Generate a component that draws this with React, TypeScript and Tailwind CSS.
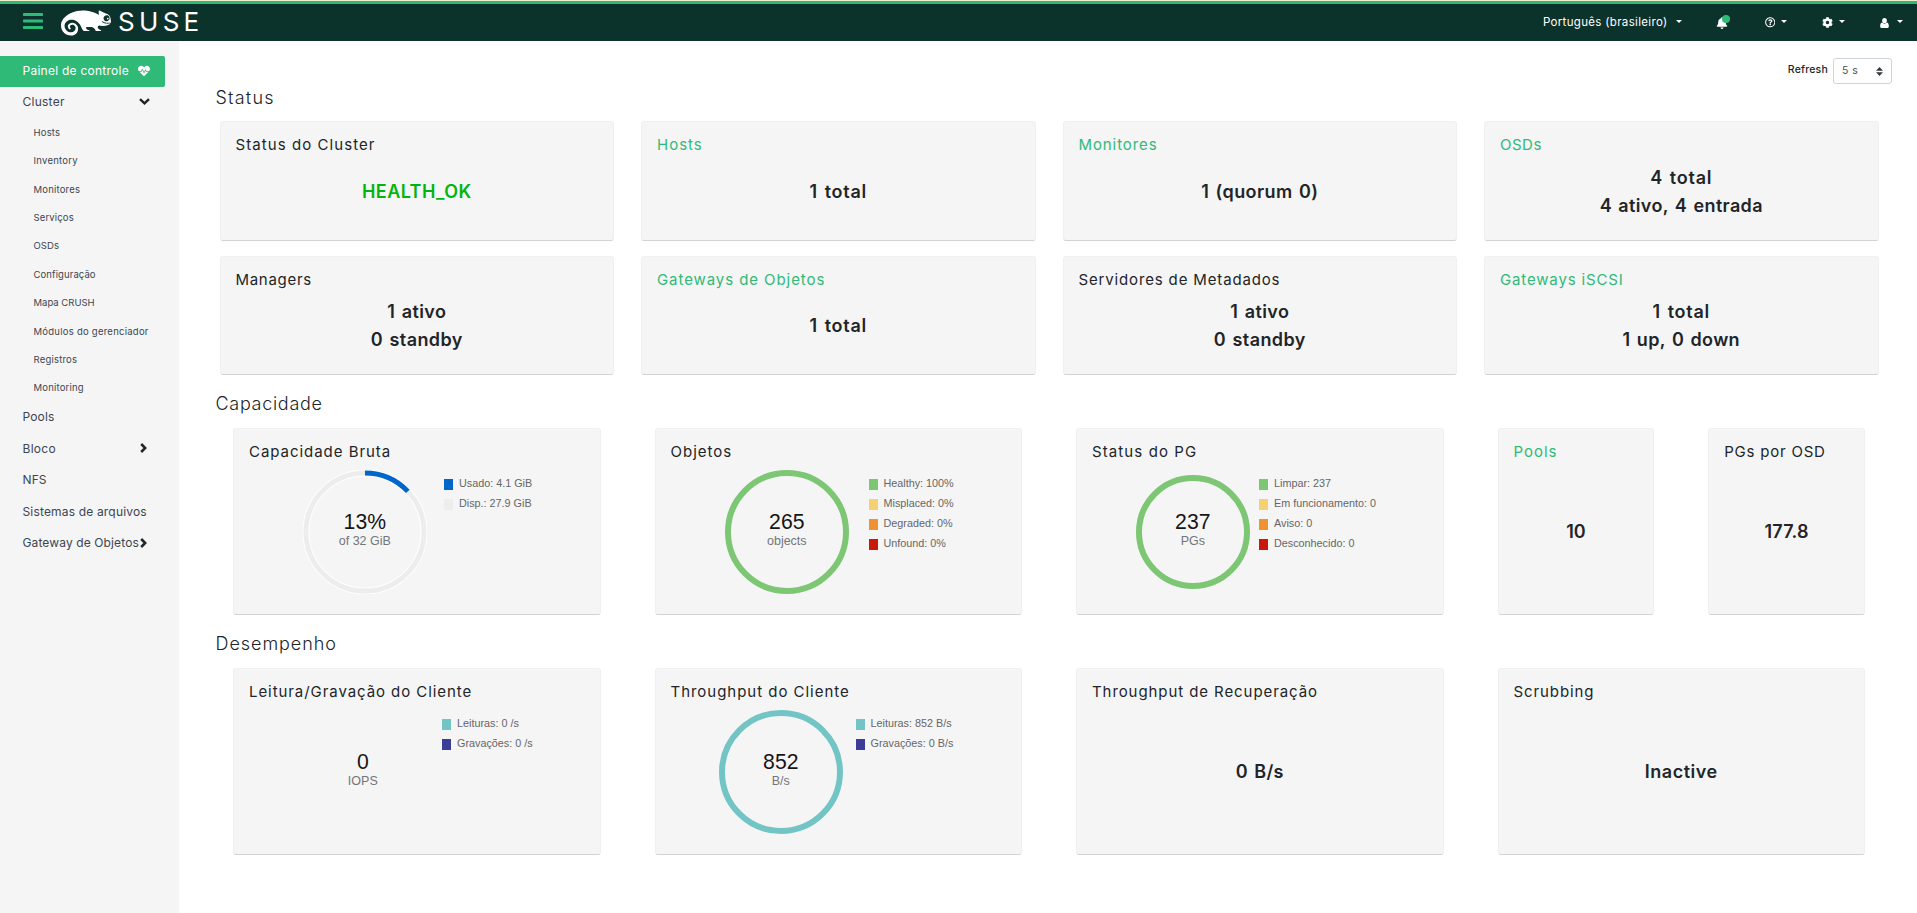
import React from "react";
import { SiSuse } from "react-icons/si";
import { FaBell, FaCog, FaHeartbeat, FaRegQuestionCircle } from "react-icons/fa";

type Legend = { color: string; label: string };

function Card({ title, link, tracking, children, className = "" }: { title: string; link?: boolean; tracking: string; children?: React.ReactNode; className?: string }) {
  return (
    <section className={`flex flex-col rounded-[3px] border border-[#f0f0f0] border-b-[#d2d3d3] bg-[#f5f5f5] ${className}`}>
      <h3 className={`h-[41px] shrink-0 whitespace-nowrap pl-[15px] pt-[11px] text-[15px] leading-6 ${tracking} ${link ? "text-[#30ba78]" : "text-[#212529]"}`}>{title}</h3>
      {children}
    </section>
  );
}

function Value({ lines, tracking, green }: { lines: string[]; tracking: string[]; green?: boolean }) {
  return (
    <div className={`flex grow flex-col items-center justify-center pb-[20px] text-[18px] font-semibold leading-[28px] [word-spacing:1.500px] ${green ? "text-[#00b50f]" : "text-[#212529]"}`}>
      {lines.map((l, i) => (
        <span key={l} className={`whitespace-nowrap ${tracking[i]}`}>{l}</span>
      ))}
    </div>
  );
}

function Donut({ value, unit, color, r = 59, share = 1 }: { value: string; unit: string; color?: string; r?: number; share?: number }) {
  const len = 2 * Math.PI * r;
  return (
    <svg width="124" height="124" viewBox="0 0 124 124" className="shrink-0 font-['Liberation_Sans',sans-serif]">
      {color && share < 1 && (
        <>
          <circle cx="62" cy="62" r={r} fill="none" stroke="#fff" strokeWidth="7" />
          <circle cx="62" cy="62" r={r} fill="none" stroke="#ededed" strokeWidth="5" />
        </>
      )}
      {color && (
        <circle cx="62" cy="62" r={r} fill="none" stroke={color} strokeWidth={share < 1 ? 5 : 6} strokeDasharray={share < 1 ? `${len * share} ${len}` : undefined} transform="rotate(-90 62 62)" />
      )}
      <text x="61.8" y="59" textAnchor="middle" fontSize="21.2" fill="#151515">{value}</text>
      <text x="61.8" y="75" textAnchor="middle" fontSize="12.5" fill="#72767b">{unit}</text>
    </svg>
  );
}

function LegendList({ items, className }: { items: Legend[]; className: string }) {
  return (
    <ul className={`flex flex-col font-['Liberation_Sans',sans-serif] text-[10.8px] text-[#666] ${className}`}>
      {items.map((it) => (
        <li key={it.label} className="flex h-5 items-center gap-[6px] whitespace-nowrap">
          <svg width="9" height="11"><rect width="9" height="11" fill={it.color} /></svg>
          <span className="-mt-px">{it.label}</span>
        </li>
      ))}
    </ul>
  );
}

const Caret = () => (
  <svg width="6" height="3" viewBox="0 0 6 3" className="mb-[3px]"><path d="M0 0h6L3 3z" fill="#fff" /></svg>
);

const ChevronRight = () => (
  <svg width="7" height="10" viewBox="0 0 7 10" className="mb-[2px] shrink-0"><path d="M1.200 1 5.200 5 1.200 9" fill="none" stroke="#212529" strokeWidth="2.500" /></svg>
);

const ChevronDown = () => (
  <svg width="11" height="7" viewBox="0 0 11 7" className="mb-[2px] shrink-0"><path d="M1 1.200 5.500 5.300 10 1.200" fill="none" stroke="#212529" strokeWidth="2.500" /></svg>
);

const subItems: [string, string][] = [
  ["Hosts", "tracking-[0.2px]"],
  ["Inventory", "tracking-[0.25px]"],
  ["Monitores", "tracking-[0.2px]"],
  ["Serviços", "tracking-[0.15px]"],
  ["OSDs", "tracking-[0.1px]"],
  ["Configuração", "tracking-[0.1px]"],
  ["Mapa CRUSH", "tracking-[0px]"],
  ["Módulos do gerenciador", "tracking-[0.25px]"],
  ["Registros", "tracking-[0.2px]"],
  ["Monitoring", "tracking-[0.2px]"],
];

const mainItems: [string, string, boolean][] = [
  ["Pools", "tracking-[0.15px]", false],
  ["Bloco", "tracking-[0.3px]", true],
  ["NFS", "tracking-[0.1px]", false],
  ["Sistemas de arquivos", "tracking-[0.17px]", false],
  ["Gateway de Objetos", "tracking-[0.12px]", true],
];

export default function App() {
  return (
    <div className="flex h-[913px] w-[1917px] flex-col overflow-hidden bg-white font-['Inter',sans-serif] text-[#212529]">
      <header className="flex h-[41px] shrink-0 items-center border-t border-[#f3eecb] bg-[#0c322c] text-white">
        <div className="flex h-full w-full items-center border-t-[3px] border-[#30ba78]">
          <svg width="20" height="16" viewBox="0 0 20 16" className="mb-[3px] ml-[23px]" fill="#30ba78">
            <rect y="0" width="20" height="3" rx="0.7" /><rect y="6.5" width="20" height="3" rx="0.7" /><rect y="13" width="20" height="3" rx="0.7" />
          </svg>
          <SiSuse className="ml-[18px] size-[50px]" />
          <span className="mb-[2px] ml-[7px] text-[26px] leading-none tracking-[4.300px]">SUSE</span>
          <nav className="ml-auto flex h-full items-center pr-[14px] text-[11.5px]">
            <span className="tracking-[0.33px]">Português (brasileiro)</span>
            <span className="ml-[8px]"><Caret /></span>
            <span className="relative ml-[34px]">
              <FaBell className="size-[12px]" />
              <i className="absolute -top-[2px] left-[6px] size-[8px] rounded-full bg-[#30ba78]" />
            </span>
            <FaRegQuestionCircle className="ml-[37px] size-[10.5px]" />
            <span className="ml-[6px]"><Caret /></span>
            <FaCog className="ml-[35px] size-[11px]" />
            <span className="ml-[6px]"><Caret /></span>
            <svg width="9" height="10" viewBox="0 0 10 10" preserveAspectRatio="none" className="ml-[35px]" fill="#fff">
              <circle cx="5" cy="2.7" r="2.6" /><path d="M2.2 4.6C.7 5 .2 6.500.2 8.200.2 9.300.8 10 1.800 10h6.400c1 0 1.600-.7 1.600-1.800 0-1.700-.5-3.200-2-3.600-1.500 1.500-4.100 1.500-5.600 0z" />
            </svg>
            <span className="ml-[8px]"><Caret /></span>
          </nav>
        </div>
      </header>

      <div className="flex min-h-0 grow">
        <aside className="w-[179px] shrink-0 bg-[#f5f5f5] pt-[15px] text-[12px] text-[#3c4650]">
          <div className="flex h-[31px] w-[165px] items-center justify-between rounded-r-[2px] bg-[#30ba78] pl-[22.5px] pr-[15px] text-white">
            <span className="whitespace-nowrap pb-px tracking-[0.25px]">Painel de controle</span>
            <FaHeartbeat className="mb-px size-[12px]" />
          </div>
          <div className="flex h-[31px] w-[165px] items-center justify-between pl-[22.5px] pr-[15px]">
            <span className="pb-px tracking-[0.25px]">Cluster</span>
            <ChevronDown />
          </div>
          <ul className="-mb-[0.8px] pt-[0.8px]">
            {subItems.map(([l, t]) => (
              <li key={l} className={`flex h-[28.4px] items-center pl-[33.500px] text-[9.5px] ${t}`}>{l}</li>
            ))}
          </ul>
          {mainItems.map(([l, t, c]) => (
            <div key={l} className="flex h-[31.5px] w-[165px] items-center justify-between pl-[22.5px] pr-[18px]">
              <span className={`whitespace-nowrap pb-px ${t}`}>{l}</span>
              {c && <ChevronRight />}
            </div>
          ))}
        </aside>

        <main className="grow">
          <div className="flex h-[46px] items-end justify-end gap-[5px] pr-[25px]">
            <label className="mb-[9px] text-[10.5px] font-medium tracking-[0.2px]">Refresh</label>
            <div className="mb-[3px] flex h-[26px] w-[59px] items-center justify-between rounded-[3px] border border-[#ced4da] bg-white pl-[8px] pr-[8px] text-[10.5px] text-[#495057]">
              <span className="[word-spacing:1px]">5 s</span>
              <svg width="7" height="9" viewBox="0 0 7 9" fill="#343a40"><path d="M3.500 0 7 3.800H0zM3.500 9 0 5.200h7z" /></svg>
            </div>
          </div>

          <h2 className="ml-[36.5px] flex h-[34px] items-center pb-[14px] text-[18px] font-light tracking-[1.200px]">Status</h2>
          <div className="ml-[40.5px] grid w-[1659px] grid-cols-4 gap-x-[27px] gap-y-[15px]">
            <Card title="Status do Cluster" tracking="tracking-[1.07px]" className="h-[120px]"><Value green lines={["HEALTH_OK"]} tracking={["tracking-[0.42px]"]} /></Card>
            <Card title="Hosts" link tracking="tracking-[1px]"><Value lines={["1 total"]} tracking={["tracking-[0.75px]"]} /></Card>
            <Card title="Monitores" link tracking="tracking-[0.9px]"><Value lines={["1 (quorum 0)"]} tracking={["tracking-[0.4px]"]} /></Card>
            <Card title="OSDs" link tracking="tracking-[0.5px]"><Value lines={["4 total", "4 ativo, 4 entrada"]} tracking={["tracking-[0.75px]", "tracking-[0.35px]"]} /></Card>
            <Card title="Managers" tracking="tracking-[0.7px]" className="h-[119px]"><Value lines={["1 ativo", "0 standby"]} tracking={["tracking-[0.4px]", "tracking-[0.41px]"]} /></Card>
            <Card title="Gateways de Objetos" link tracking="tracking-[0.92px]"><Value lines={["1 total"]} tracking={["tracking-[0.75px]"]} /></Card>
            <Card title="Servidores de Metadados" tracking="tracking-[0.85px]"><Value lines={["1 ativo", "0 standby"]} tracking={["tracking-[0.4px]", "tracking-[0.41px]"]} /></Card>
            <Card title="Gateways iSCSI" link tracking="tracking-[0.85px]"><Value lines={["1 total", "1 up, 0 down"]} tracking={["tracking-[0.75px]", "tracking-[0.35px]"]} /></Card>
          </div>

          <h2 className="ml-[36.5px] flex h-[53px] items-center pt-[4px] text-[18px] font-light tracking-[0.7px]">Capacidade</h2>
          <div className="ml-[54px] grid h-[187px] w-[1632px] grid-cols-4 gap-x-[54px]">
            <Card title="Capacidade Bruta" tracking="tracking-[0.96px]">
              <div className="flex pl-[69px]">
                <Donut value="13%" unit="of 32 GiB" color="#0066cc" share={0.129} />
                <LegendList className="ml-[17px] mt-[4px]" items={[{ color: "#0066cc", label: "Usado: 4.1 GiB" }, { color: "#ededed", label: "Disp.: 27.9 GiB" }]} />
              </div>
            </Card>
            <Card title="Objetos" tracking="tracking-[1px]">
              <div className="flex pl-[69px]">
                <Donut value="265" unit="objects" color="#7cc674" />
                <LegendList className="ml-[20px] mt-[4px]" items={[{ color: "#7cc674", label: "Healthy: 100%" }, { color: "#f6d173", label: "Misplaced: 0%" }, { color: "#ef9234", label: "Degraded: 0%" }, { color: "#c9190b", label: "Unfound: 0%" }]} />
              </div>
            </Card>
            <Card title="Status do PG" tracking="tracking-[1.100px]">
              <div className="flex pl-[54px]">
                <Donut value="237" unit="PGs" color="#7cc674" r={54} />
                <LegendList className="ml-[4px] mt-[4px]" items={[{ color: "#7cc674", label: "Limpar: 237" }, { color: "#f6d173", label: "Em funcionamento: 0" }, { color: "#ef9234", label: "Aviso: 0" }, { color: "#c9190b", label: "Desconhecido: 0" }]} />
              </div>
            </Card>
            <div className="grid grid-cols-2 gap-x-[54px]">
              <Card title="Pools" link tracking="tracking-[1px]"><Value lines={["10"]} tracking={["tracking-[0px]"]} /></Card>
              <Card title="PGs por OSD" tracking="tracking-[0.78px]"><Value lines={["177.8"]} tracking={["tracking-[0.2px]"]} /></Card>
            </div>
          </div>

          <h2 className="ml-[36.5px] flex h-[53px] items-center pt-[4px] text-[18px] font-light tracking-[0.95px]">Desempenho</h2>
          <div className="ml-[54px] grid h-[187px] w-[1632px] grid-cols-4 gap-x-[54px]">
            <Card title="Leitura/Gravação do Cliente" tracking="tracking-[0.93px]">
              <div className="flex pl-[67px]">
                <Donut value="0" unit="IOPS" />
                <LegendList className="ml-[17px] mt-[4px]" items={[{ color: "#73c5c5", label: "Leituras: 0 /s" }, { color: "#3c3d99", label: "Gravações: 0 /s" }]} />
              </div>
            </Card>
            <Card title="Throughput do Cliente" tracking="tracking-[0.97px]">
              <div className="flex pl-[63px]">
                <Donut value="852" unit="B/s" color="#73c5c5" />
                <LegendList className="ml-[13px] mt-[4px]" items={[{ color: "#73c5c5", label: "Leituras: 852 B/s" }, { color: "#3c3d99", label: "Gravações: 0 B/s" }]} />
              </div>
            </Card>
            <Card title="Throughput de Recuperação" tracking="tracking-[0.92px]"><Value lines={["0 B/s"]} tracking={["tracking-[0.3px]"]} /></Card>
            <Card title="Scrubbing" tracking="tracking-[0.9px]"><Value lines={["Inactive"]} tracking={["tracking-[0.5px]"]} /></Card>
          </div>
        </main>
      </div>
    </div>
  );
}
